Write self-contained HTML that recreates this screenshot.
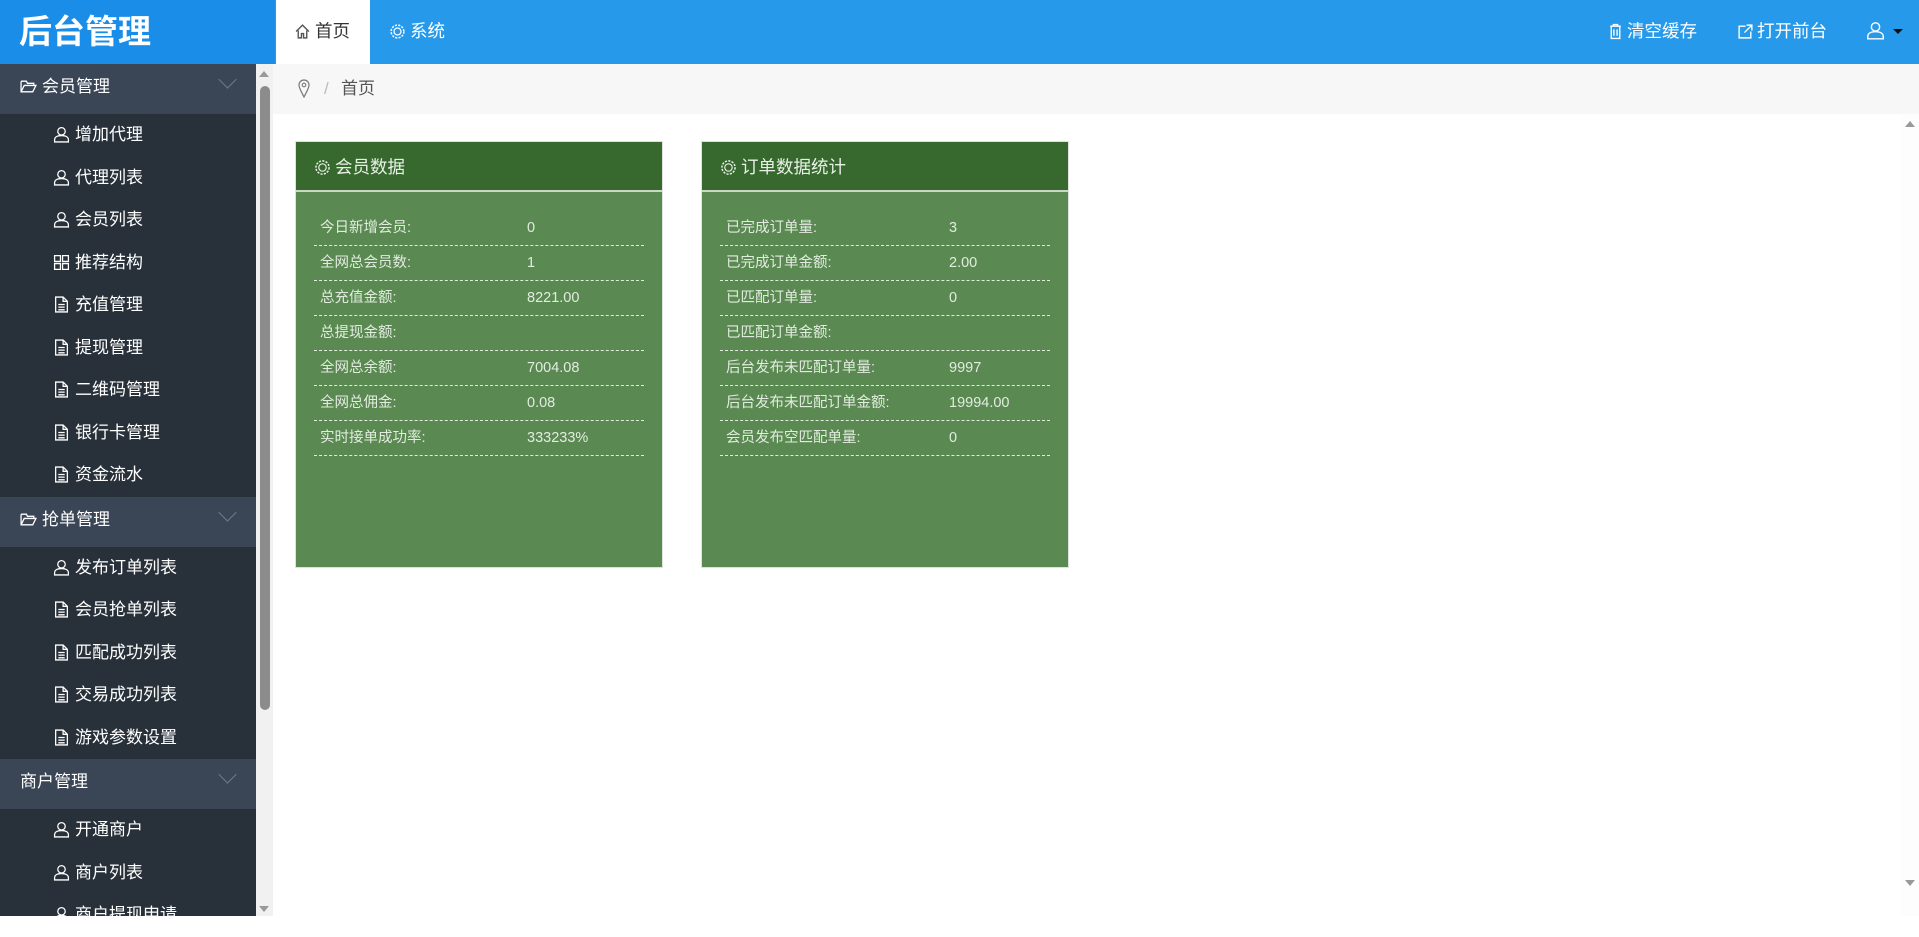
<!DOCTYPE html>
<html><head><meta charset="utf-8">
<style>
*{margin:0;padding:0;box-sizing:border-box}
body{width:1919px;height:916px;overflow:hidden;font-family:"Liberation Sans","Noto Sans CJK SC",sans-serif;background:#fff;position:relative}
.hdr{position:absolute;left:0;top:0;width:1919px;height:64px;background:#2699ea}
.logo{position:absolute;left:0;top:0;width:275px;height:64px;background:#1a8de8;color:#fff;font-size:33px;font-weight:bold;line-height:64px;padding-left:19px}
.tab{position:absolute;top:0;height:64px;line-height:62px;font-size:17.5px;color:#fff}
.tab.act{background:#fff;color:#333;left:276px;width:94px;padding-left:18px}
.side{position:absolute;left:0;top:64px;width:256px;height:852px;background:#28303a;color:#fff;font-size:17px}
.grp{height:50px;background:#3a4556;line-height:46px;padding-left:20px;position:relative}
.grp .chev{position:absolute;left:221px;top:9px;width:13px;height:13px;border-right:1px solid #6e7a8a;border-bottom:1px solid #6e7a8a;transform:rotate(45deg)}
.it{height:42.5px;line-height:42.5px;padding-left:53px;color:#fff}
.ic{display:inline-block;width:17px;height:17px;vertical-align:-3px;margin-right:5px}
.sb{position:absolute;left:256px;top:64px;width:17px;height:852px;background:#f1f1f1}
.thumb{position:absolute;left:260px;top:86px;width:10px;height:624px;background:#8c8c8c;border-radius:5px}
.crumb{position:absolute;left:273px;top:64px;width:1646px;height:50px;background:#f7f7f7;font-size:17px;color:#555;line-height:50px}
.card{position:absolute;top:141px;width:368px;height:427px;background:#5a8a52;border:1px solid #e0e0e0}
.ch{height:50px;background:#37692f;border-bottom:2px solid #c8d8c4;color:#e8f0e6;font-size:17.5px;line-height:50px;padding-left:18px}
.rows{padding:19px 18px 0 18px}
.row{height:35px;border-bottom:1px dashed #e2ebe0;color:#e2ebe0;font-size:14.5px;line-height:35px;position:relative;padding-left:6px}
.row span{position:absolute;left:213px}
</style></head><body>
<div class="hdr">
<div class="logo">后台管理</div>
<div class="tab act"><svg class="ic" viewBox="0 0 16 16" style="margin-right:4px"><path d="M2 8L8 2l6 6M4 7v7h3v-4h2v4h3V7" fill="none" stroke="#555" stroke-width="1.3"/></svg>首页</div>
<div class="tab" style="left:389px"><svg class="ic" viewBox="0 0 16 16" style="margin-right:4px"><circle cx="8" cy="8" r="6" fill="none" stroke="#fff" stroke-width="1.4" stroke-dasharray="2 1.2"/><circle cx="8" cy="8" r="3.3" fill="none" stroke="#fff" stroke-width="1.2"/></svg>系统</div>
<div class="tab" style="left:1607px"><svg class="ic" viewBox="0 0 16 16" style="margin-right:3px"><path d="M3 3h10M6 3V1.5h4V3M4 3.5v11h8v-11M6.5 6v6M9.5 6v6" fill="none" stroke="#fff" stroke-width="1.3"/></svg>清空缓存</div>
<div class="tab" style="left:1737px"><svg class="ic" viewBox="0 0 16 16" style="margin-right:3px"><path d="M8 3H2v11h11V8M9 2h5v5M14 2L7 9" fill="none" stroke="#fff" stroke-width="1.3"/></svg>打开前台</div>
<div class="tab" style="left:1866px"><svg class="ic" viewBox="0 0 16 16" style="width:19px;height:19px"><circle cx="8" cy="5" r="3.5" fill="none" stroke="#fff" stroke-width="1.2"/><path d="M1.5 15v-2c0-2.5 2.5-4 6.5-4s6.5 1.5 6.5 4v2z" fill="none" stroke="#fff" stroke-width="1.2"/></svg></div>
<div style="position:absolute;left:1893px;top:29px;width:0;height:0;border-left:5px solid transparent;border-right:5px solid transparent;border-top:5px solid #111"></div>
</div>
<div class="side">
<div class="grp"><svg class="ic" viewBox="0 0 16 16" style="margin-right:5px"><path d="M1 3h5l1 2h6v2M1 3v10h11l3-6H4l-3 6" fill="none" stroke="#fff" stroke-width="1.2"/></svg>会员管理<i class="chev"></i></div>
<div class="it"><svg class="ic" viewBox="0 0 16 16"><circle cx="8" cy="5" r="3.5" fill="none" stroke="#fff" stroke-width="1.2"/><path d="M1.5 15v-2c0-2.5 2.5-4 6.5-4s6.5 1.5 6.5 4v2z" fill="none" stroke="#fff" stroke-width="1.2"/></svg>增加代理</div>
<div class="it"><svg class="ic" viewBox="0 0 16 16"><circle cx="8" cy="5" r="3.5" fill="none" stroke="#fff" stroke-width="1.2"/><path d="M1.5 15v-2c0-2.5 2.5-4 6.5-4s6.5 1.5 6.5 4v2z" fill="none" stroke="#fff" stroke-width="1.2"/></svg>代理列表</div>
<div class="it"><svg class="ic" viewBox="0 0 16 16"><circle cx="8" cy="5" r="3.5" fill="none" stroke="#fff" stroke-width="1.2"/><path d="M1.5 15v-2c0-2.5 2.5-4 6.5-4s6.5 1.5 6.5 4v2z" fill="none" stroke="#fff" stroke-width="1.2"/></svg>会员列表</div>
<div class="it"><svg class="ic" viewBox="0 0 16 16"><path d="M1.5 1.5h5.5v5.5H1.5zM9 1.5h5.5v5.5H9zM1.5 9h5.5v5.5H1.5zM9 9h5.5v5.5H9z" fill="none" stroke="#fff" stroke-width="1.2"/></svg>推荐结构</div>
<div class="it"><svg class="ic" viewBox="0 0 16 16"><path d="M2.5 1h7l4 4v10h-11zM9.5 1v4h4M5 8h6M5 10.5h6M5 13h6" fill="none" stroke="#fff" stroke-width="1.2"/></svg>充值管理</div>
<div class="it"><svg class="ic" viewBox="0 0 16 16"><path d="M2.5 1h7l4 4v10h-11zM9.5 1v4h4M5 8h6M5 10.5h6M5 13h6" fill="none" stroke="#fff" stroke-width="1.2"/></svg>提现管理</div>
<div class="it"><svg class="ic" viewBox="0 0 16 16"><path d="M2.5 1h7l4 4v10h-11zM9.5 1v4h4M5 8h6M5 10.5h6M5 13h6" fill="none" stroke="#fff" stroke-width="1.2"/></svg>二维码管理</div>
<div class="it"><svg class="ic" viewBox="0 0 16 16"><path d="M2.5 1h7l4 4v10h-11zM9.5 1v4h4M5 8h6M5 10.5h6M5 13h6" fill="none" stroke="#fff" stroke-width="1.2"/></svg>银行卡管理</div>
<div class="it"><svg class="ic" viewBox="0 0 16 16"><path d="M2.5 1h7l4 4v10h-11zM9.5 1v4h4M5 8h6M5 10.5h6M5 13h6" fill="none" stroke="#fff" stroke-width="1.2"/></svg>资金流水</div>
<div class="grp"><svg class="ic" viewBox="0 0 16 16" style="margin-right:5px"><path d="M1 3h5l1 2h6v2M1 3v10h11l3-6H4l-3 6" fill="none" stroke="#fff" stroke-width="1.2"/></svg>抢单管理<i class="chev"></i></div>
<div class="it"><svg class="ic" viewBox="0 0 16 16"><circle cx="8" cy="5" r="3.5" fill="none" stroke="#fff" stroke-width="1.2"/><path d="M1.5 15v-2c0-2.5 2.5-4 6.5-4s6.5 1.5 6.5 4v2z" fill="none" stroke="#fff" stroke-width="1.2"/></svg>发布订单列表</div>
<div class="it"><svg class="ic" viewBox="0 0 16 16"><path d="M2.5 1h7l4 4v10h-11zM9.5 1v4h4M5 8h6M5 10.5h6M5 13h6" fill="none" stroke="#fff" stroke-width="1.2"/></svg>会员抢单列表</div>
<div class="it"><svg class="ic" viewBox="0 0 16 16"><path d="M2.5 1h7l4 4v10h-11zM9.5 1v4h4M5 8h6M5 10.5h6M5 13h6" fill="none" stroke="#fff" stroke-width="1.2"/></svg>匹配成功列表</div>
<div class="it"><svg class="ic" viewBox="0 0 16 16"><path d="M2.5 1h7l4 4v10h-11zM9.5 1v4h4M5 8h6M5 10.5h6M5 13h6" fill="none" stroke="#fff" stroke-width="1.2"/></svg>交易成功列表</div>
<div class="it"><svg class="ic" viewBox="0 0 16 16"><path d="M2.5 1h7l4 4v10h-11zM9.5 1v4h4M5 8h6M5 10.5h6M5 13h6" fill="none" stroke="#fff" stroke-width="1.2"/></svg>游戏参数设置</div>
<div class="grp">商户管理<i class="chev"></i></div>
<div class="it"><svg class="ic" viewBox="0 0 16 16"><circle cx="8" cy="5" r="3.5" fill="none" stroke="#fff" stroke-width="1.2"/><path d="M1.5 15v-2c0-2.5 2.5-4 6.5-4s6.5 1.5 6.5 4v2z" fill="none" stroke="#fff" stroke-width="1.2"/></svg>开通商户</div>
<div class="it"><svg class="ic" viewBox="0 0 16 16"><circle cx="8" cy="5" r="3.5" fill="none" stroke="#fff" stroke-width="1.2"/><path d="M1.5 15v-2c0-2.5 2.5-4 6.5-4s6.5 1.5 6.5 4v2z" fill="none" stroke="#fff" stroke-width="1.2"/></svg>商户列表</div>
<div class="it"><svg class="ic" viewBox="0 0 16 16"><circle cx="8" cy="5" r="3.5" fill="none" stroke="#fff" stroke-width="1.2"/><path d="M1.5 15v-2c0-2.5 2.5-4 6.5-4s6.5 1.5 6.5 4v2z" fill="none" stroke="#fff" stroke-width="1.2"/></svg>商户提现申请</div>
</div>
<div class="sb"></div>
<div class="thumb"></div>
<div style="position:absolute;left:259px;top:71px;border-left:5px solid transparent;border-right:5px solid transparent;border-bottom:6px solid #999"></div>
<div style="position:absolute;left:259px;top:906px;border-left:5px solid transparent;border-right:5px solid transparent;border-top:6px solid #999"></div>
<div class="crumb">
<svg style="position:absolute;left:24px;top:15px" width="14" height="19" viewBox="0 0 14 19"><path d="M7 18C4 12 2 9 2 6a5 5 0 0 1 10 0c0 3-2 6-5 12z" fill="none" stroke="#777" stroke-width="1.2"/><circle cx="7" cy="6" r="1.8" fill="none" stroke="#777" stroke-width="1.1"/></svg>
<span style="position:absolute;left:51px;color:#bbb">/</span>
<span style="position:absolute;left:68px">首页</span>
</div>
<div style="position:absolute;left:1901px;top:114px;width:18px;height:802px;background:#fdfdfd"></div>
<div style="position:absolute;left:1905px;top:121px;border-left:5px solid transparent;border-right:5px solid transparent;border-bottom:6px solid #999"></div>
<div style="position:absolute;left:1905px;top:880px;border-left:5px solid transparent;border-right:5px solid transparent;border-top:6px solid #999"></div>

<div class="card" style="left:295px">
<div class="ch"><svg class="ic" viewBox="0 0 16 16" style="margin-right:4px"><circle cx="8" cy="8" r="6.2" fill="none" stroke="#e8f0e6" stroke-width="1.4" stroke-dasharray="2 1.2"/><circle cx="8" cy="8" r="3.5" fill="none" stroke="#e8f0e6" stroke-width="1.1"/></svg>会员数据</div>
<div class="rows">
<div class="row">今日新增会员:<span>0</span></div>
<div class="row">全网总会员数:<span>1</span></div>
<div class="row">总充值金额:<span>8221.00</span></div>
<div class="row">总提现金额:<span></span></div>
<div class="row">全网总余额:<span>7004.08</span></div>
<div class="row">全网总佣金:<span>0.08</span></div>
<div class="row">实时接单成功率:<span>333233%</span></div>
</div></div>

<div class="card" style="left:701px">
<div class="ch"><svg class="ic" viewBox="0 0 16 16" style="margin-right:4px"><circle cx="8" cy="8" r="6.2" fill="none" stroke="#e8f0e6" stroke-width="1.4" stroke-dasharray="2 1.2"/><circle cx="8" cy="8" r="3.5" fill="none" stroke="#e8f0e6" stroke-width="1.1"/></svg>订单数据统计</div>
<div class="rows">
<div class="row">已完成订单量:<span style="left:229px">3</span></div>
<div class="row">已完成订单金额:<span style="left:229px">2.00</span></div>
<div class="row">已匹配订单量:<span style="left:229px">0</span></div>
<div class="row">已匹配订单金额:<span style="left:229px"></span></div>
<div class="row">后台发布未匹配订单量:<span style="left:229px">9997</span></div>
<div class="row">后台发布未匹配订单金额:<span style="left:229px">19994.00</span></div>
<div class="row">会员发布空匹配单量:<span style="left:229px">0</span></div>
</div></div>
</body></html>
